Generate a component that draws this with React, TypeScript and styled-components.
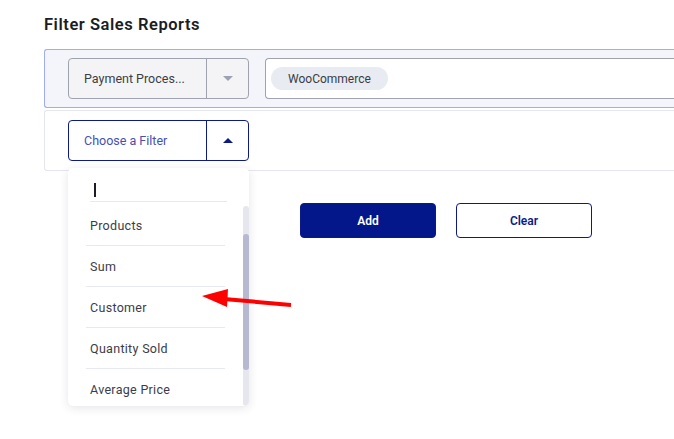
import React from "react";
import styled, { createGlobalStyle } from "styled-components";

const GlobalStyle = createGlobalStyle`
  html, body {
    margin: 0;
    padding: 0;
    background: #ffffff;
    overflow: hidden;
  }
  body {
    font-family: Roboto, "Liberation Sans", Arial, sans-serif;
    -webkit-font-smoothing: antialiased;
  }
`;

const Page = styled.div`
  position: relative;
  width: 674px;
  height: 439px;
  padding: 15px 0 0 44px;
  box-sizing: border-box;
`;

const Title = styled.h2`
  margin: 0 0 14px;
  font-size: 16.5px;
  line-height: 20px;
  font-weight: 600;
  color: #1c1d22;
  letter-spacing: 0.55px;
`;

const Panel = styled.div<{ $active?: boolean }>`
  display: flex;
  align-items: center;
  gap: 16px;
  width: 630px;
  box-sizing: border-box;
  padding: ${(p) => (p.$active ? "8px 0 8px 23px" : "9px 0 9px 23px")};
  border: 1px solid ${(p) => (p.$active ? "#a3acf2" : "#e6e6f2")};
  border-right: none;
  border-radius: 3px 0 0 3px;
  background: ${(p) => (p.$active ? "#f4f5fa" : "#ffffff")};
  margin-bottom: 2px;
`;

const SelectWrap = styled.div`
  position: relative;
`;

const Select = styled.div<{ $open?: boolean }>`
  display: flex;
  width: 181px;
  height: 41px;
  box-sizing: border-box;
  border: 1px solid ${(p) => (p.$open ? "#0b1a88" : "#9ea3ad")};
  border-radius: 4px;
  background: ${(p) => (p.$open ? "#ffffff" : "#f4f4f6")};
`;

const SelectValue = styled.div<{ $open?: boolean }>`
  flex: 0 0 138px;
  box-sizing: border-box;
  display: flex;
  align-items: center;
  padding-left: 15px;
  font-size: 12.5px;
  color: ${(p) => (p.$open ? "#4450b6" : "#3b3e46")};
  border-right: 1px solid ${(p) => (p.$open ? "#0b1a88" : "#9ea3ad")};
  white-space: nowrap;
  overflow: hidden;
`;

const Caret = styled.div<{ $up?: boolean }>`
  flex: 1;
  display: flex;
  align-items: center;
  justify-content: center;
  &::after {
    content: "";
    width: 0;
    height: 0;
    border-left: 5.5px solid transparent;
    border-right: 5.5px solid transparent;
    ${(p) =>
      p.$up
        ? "border-bottom: 5.5px solid #0b1a88;"
        : "border-top: 5.5px solid #9ca1b3;"}
  }
`;

const TagInput = styled.div`
  flex: 1;
  height: 41px;
  box-sizing: border-box;
  display: flex;
  align-items: center;
  padding-left: 5px;
  background: #ffffff;
  border: 1px solid #9ea3ad;
  border-right: none;
  border-radius: 4px 0 0 4px;
`;

const Chip = styled.span`
  display: inline-flex;
  align-items: center;
  height: 23px;
  padding: 0 17px 0 17px;
  border-radius: 12px;
  background: #e8ebf1;
  font-size: 12px;
  color: #3a3d45;
`;

const Dropdown = styled.div`
  position: absolute;
  top: 48px;
  left: 0;
  width: 181px;
  height: 238px;
  background: #ffffff;
  border-radius: 5px;
  box-shadow: 0 2px 10px rgba(40, 40, 70, 0.12);
  overflow: hidden;
  z-index: 5;
`;

const Search = styled.div`
  margin: 0 22px 0 22px;
  height: 33px;
  border-bottom: 1px solid #e8e8f2;
  position: relative;
  &::before {
    content: "";
    position: absolute;
    left: 4px;
    top: 15px;
    width: 1.5px;
    height: 14px;
    background: #1c1d28;
  }
`;

const List = styled.ul`
  list-style: none;
  margin: 3px 0 0 18px;
  padding: 0;
  width: 139px;
`;

const Item = styled.li`
  height: 41px;
  box-sizing: border-box;
  display: flex;
  align-items: center;
  padding-left: 4px;
  font-size: 12.5px;
  letter-spacing: 0.3px;
  color: #3a3d4a;
  border-bottom: 1px solid #e8e8f2;
`;

const ScrollTrack = styled.div`
  position: absolute;
  right: 0;
  top: 38px;
  bottom: 0;
  width: 6px;
  border-radius: 3px;
  background: #e6e6ee;
`;

const ScrollThumb = styled.div`
  position: absolute;
  left: 0;
  top: 28px;
  width: 6px;
  height: 136px;
  border-radius: 3px;
  background: #b6b9d0;
`;

const Actions = styled.div`
  display: flex;
  gap: 20px;
  padding-left: 256px;
  margin-top: 32px;
`;

const Button = styled.button<{ $primary?: boolean }>`
  width: 136px;
  height: 35px;
  border-radius: 4px;
  border: 1px solid #0b1a88;
  background: ${(p) => (p.$primary ? "#03178b" : "#ffffff")};
  color: ${(p) => (p.$primary ? "#ffffff" : "#0b1a88")};
  font-family: Roboto, "Liberation Sans", Arial, sans-serif;
  font-size: 12px;
  font-weight: 600;
  cursor: pointer;
`;

const Arrow = styled.svg`
  position: absolute;
  left: 196px;
  top: 284px;
  width: 100px;
  height: 30px;
  pointer-events: none;
  z-index: 10;
`;

const items = ["Products", "Sum", "Customer", "Quantity Sold", "Average Price"];

export default function App() {
  return (
    <>
      <GlobalStyle />
      <Page>
        <Title>Filter Sales Reports</Title>
        <Panel $active>
          <Select>
            <SelectValue>Payment Proces...</SelectValue>
            <Caret />
          </Select>
          <TagInput>
            <Chip>WooCommerce</Chip>
          </TagInput>
        </Panel>
        <Panel>
          <SelectWrap>
            <Select $open>
              <SelectValue $open>Choose a Filter</SelectValue>
              <Caret $up />
            </Select>
            <Dropdown>
              <Search />
              <List>
                {items.map((it) => (
                  <Item key={it}>{it}</Item>
                ))}
              </List>
              <ScrollTrack>
                <ScrollThumb />
              </ScrollTrack>
            </Dropdown>
          </SelectWrap>
        </Panel>
        <Actions>
          <Button $primary>Add</Button>
          <Button>Clear</Button>
        </Actions>
        <Arrow viewBox="196 284 100 30">
          <line x1="224" y1="299" x2="291" y2="305" stroke="#ff0000" strokeWidth="4" />
          <polygon points="202,296 228,289 227,307" fill="#ff0000" />
        </Arrow>
      </Page>
    </>
  );
}
